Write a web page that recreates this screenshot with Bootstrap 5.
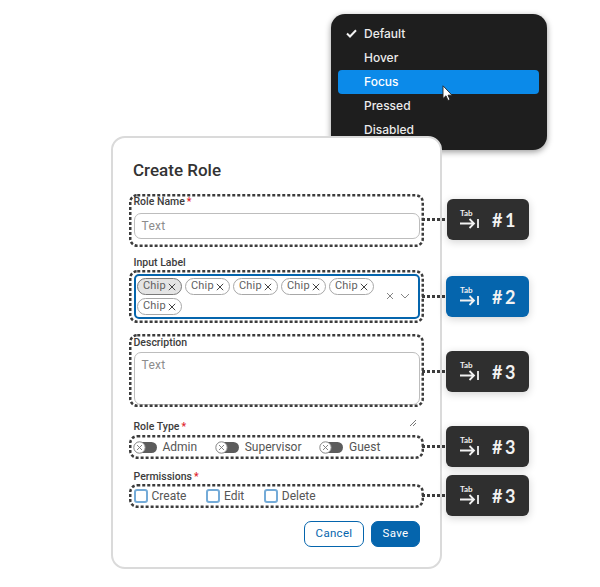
<!DOCTYPE html>
<html lang="en">
<head>
<meta charset="utf-8">
<title>Create Role</title>
<link href="https://cdn.jsdelivr.net/npm/bootstrap@5.3.0/dist/css/bootstrap.min.css" rel="stylesheet">
<style>
html,body{margin:0;background:#fff;overflow:hidden}
.stage{position:relative;width:600px;height:587px;font-family:Roboto,"Liberation Sans",sans-serif;color:#3a3a3a}
.state-menu{position:absolute;left:331px;top:14px;width:216px;height:136px;background:#1e1e1e;border-radius:14px;box-shadow:0 2px 6px rgba(0,0,0,.4);padding:8px 8px 8px 7px;font-family:Inter,"Liberation Sans",sans-serif;font-size:12px;font-weight:500;color:#ececec}
.state-item{height:24px;display:flex;align-items:center;padding:0 0 0 26px;border-radius:4px;position:relative}
.state-item.is-focus{background:#0b8ae9;color:#fff}
.state-check{position:absolute;left:8px;top:7px}
.m-cursor{position:absolute;left:111px;top:71px}
.role-card{position:absolute;left:111px;top:136px;width:331px;height:433px;background:#fff;border:2px solid #dadada;border-radius:14px;padding:21.5px 16px 0 16px}
.role-title{font-size:17px;font-weight:500;color:#333;line-height:21px;margin:0 0 13px 4px}
.ring{padding:2.5px 4.5px;position:relative}
.ring-dash{position:absolute;left:0;top:0;width:100%;height:100%;pointer-events:none}
.ring-dash rect{x:1.25px;y:1.25px;width:calc(100% - 2.5px);height:calc(100% - 2.5px);rx:7px;fill:none;stroke:#3c3c3c;stroke-width:2.5px;stroke-dasharray:3 2}
.field-label{font-size:10.5px;font-weight:500;color:#3c3c3c;line-height:12px}
.req{color:#e01e2b;margin-left:2px}
.outside{margin-left:4.5px}
.input-lbl{margin-top:10px}
.type-lbl{margin-top:14px}
.perm-lbl{margin-top:12px}
.ring-a{height:53px}
.ring-a .field-label{margin-bottom:5px}
.text-box{height:26px;border:1px solid #bdbdbd;border-radius:7px;font-size:12px;color:#8c8c8c;padding:4px 7px;letter-spacing:.3px;line-height:16px}
.ring-b{height:53px;margin-top:1.5px}
.ring-b .chip-box{height:45px;border:2px solid #0565ad;border-radius:5px;margin-top:1.5px;padding:2px 1.5px;display:flex;align-items:flex-start}
.chips{display:flex;flex-wrap:wrap;gap:3px;width:242px}
.chip-pill{height:17px;width:45px;border:1px solid #a8a8a8;border-radius:9px;font-size:11px;color:#5f5f5f;display:flex;align-items:center;justify-content:space-between;padding:0 5px;letter-spacing:.2px}
.chip-pill.on{background:#e4e4e4;border-color:#7a7a7a}
.chip-ctl{display:flex;gap:6px;margin-left:auto;margin-top:14px;margin-right:6px}
.ring-c{height:73px;margin-top:11px}
.ring-c .field-label{margin-bottom:3px}
.area-box{height:53px}
.ring-d,.ring-e{display:flex;align-items:center;font-size:12px;color:#555}
.ring-d{height:24px;margin-top:2px}
.ring-e{height:24px;margin-top:1px}
.opt{display:flex;align-items:center}
.gap-tog{margin-right:18.5px}
.gap-chk{margin-right:19.5px}
.tog{width:23px;height:11px;border-radius:6px;background:#5c5c5c;position:relative;margin-right:6px}
.tog svg{position:absolute;left:-1px;top:-1px}
.chk{width:14px;height:14px;border:2px solid #74abd8;border-radius:3px;margin-right:4px}
.act-row{display:flex;justify-content:flex-end;gap:7px;margin-top:13px;padding-right:4px}
.act{height:26px;border-radius:7px;font-size:11.5px;letter-spacing:.3px;display:flex;align-items:center;justify-content:center;padding:0}
.act-out{width:60px;background:#fff;border:1px solid #0565ad;color:#0565ad}
.act-fill{width:49px;background:#0565ad;border:1px solid #0565ad;color:#fff}
.resize-mark{position:absolute;left:296px;top:281px}
.tab-node{position:absolute;left:422px;width:107px;height:41px;display:flex;align-items:center}
.lead-line{flex:1;height:2.5px;background:repeating-linear-gradient(90deg,#3c3c3c 0 3px,transparent 3px 5px)}
.tab-key{width:83px;height:41px;background:#2f2f2f;border-radius:6px;color:#f2f2f2;box-shadow:0 2px 8px rgba(0,0,0,.18);display:flex;align-items:center;padding-left:14px;font-family:Lato,"Liberation Sans",sans-serif}
.tab-key.first{width:82px;padding-left:13px}
.tab-key.is-now{background:#0565ad}
.tab-glyph{width:22px;display:flex;flex-direction:column;font-size:8px;line-height:9px;font-weight:700;margin-top:-1px}
.tab-num{font-size:18px;font-weight:700;margin-left:10px;letter-spacing:2.5px;line-height:20px}
</style>
</head>
<body>
<main class="stage">
  <div class="state-menu">
    <div class="state-item"><svg class="state-check" width="11" height="9" viewBox="0 0 11 9"><path d="M1 4.5 4 7.5 10 1.2" fill="none" stroke="#f2f2f2" stroke-width="2"/></svg>Default</div>
    <div class="state-item">Hover</div>
    <div class="state-item is-focus">Focus</div>
    <div class="state-item">Pressed</div>
    <div class="state-item">Disabled</div>
    <svg class="m-cursor" width="11" height="17" viewBox="0 0 11 17"><path d="M1 .8V13.5L4 10.8 6 15.5 8 14.6 6 10.2H10Z" fill="#fff" stroke="#222" stroke-width=".9"/></svg>
  </div>

  <section class="role-card">
    <h1 class="role-title">Create Role</h1>
    <div class="ring ring-a">
      <svg class="ring-dash"><rect/></svg>
      <div class="field-label">Role Name<span class="req">*</span></div>
      <div class="text-box">Text</div>
    </div>
    <div class="field-label outside input-lbl">Input Label</div>
    <div class="ring ring-b">
      <svg class="ring-dash"><rect/></svg>
      <div class="chip-box">
        <div class="chips">
          <span class="chip-pill on">Chip<svg width="8" height="8" viewBox="0 0 8 8"><path d="M.8 .8 7.2 7.2M7.2 .8 .8 7.2" stroke="#444" stroke-width="1"/></svg></span>
          <span class="chip-pill">Chip<svg width="8" height="8" viewBox="0 0 8 8"><path d="M.8 .8 7.2 7.2M7.2 .8 .8 7.2" stroke="#444" stroke-width="1"/></svg></span>
          <span class="chip-pill">Chip<svg width="8" height="8" viewBox="0 0 8 8"><path d="M.8 .8 7.2 7.2M7.2 .8 .8 7.2" stroke="#444" stroke-width="1"/></svg></span>
          <span class="chip-pill">Chip<svg width="8" height="8" viewBox="0 0 8 8"><path d="M.8 .8 7.2 7.2M7.2 .8 .8 7.2" stroke="#444" stroke-width="1"/></svg></span>
          <span class="chip-pill">Chip<svg width="8" height="8" viewBox="0 0 8 8"><path d="M.8 .8 7.2 7.2M7.2 .8 .8 7.2" stroke="#444" stroke-width="1"/></svg></span>
          <span class="chip-pill">Chip<svg width="8" height="8" viewBox="0 0 8 8"><path d="M.8 .8 7.2 7.2M7.2 .8 .8 7.2" stroke="#444" stroke-width="1"/></svg></span>
        </div>
        <div class="chip-ctl">
          <svg width="8" height="8" viewBox="0 0 8 8"><path d="M1 1 7 7M7 1 1 7" stroke="#777" stroke-width=".9"/></svg>
          <svg width="10" height="8" viewBox="0 0 10 8"><path d="M1 2 5 6 9 2" fill="none" stroke="#777" stroke-width=".9"/></svg>
        </div>
      </div>
    </div>
    <div class="ring ring-c">
      <svg class="ring-dash"><rect/></svg>
      <div class="field-label">Description</div>
      <div class="text-box area-box">Text</div>
    </div>
    <div class="field-label outside type-lbl">Role Type<span class="req">*</span></div>
    <div class="ring ring-d">
      <svg class="ring-dash"><rect/></svg>
      <span class="opt gap-tog"><span class="tog"><svg width="13" height="13" viewBox="0 0 13 13"><circle cx="6.5" cy="6.5" r="5.7" fill="#fff" stroke="#888"/><path d="M4 4 9 9M9 4 4 9" stroke="#777" stroke-width=".9"/></svg></span>Admin</span>
      <span class="opt gap-tog"><span class="tog"><svg width="13" height="13" viewBox="0 0 13 13"><circle cx="6.5" cy="6.5" r="5.7" fill="#fff" stroke="#888"/><path d="M4 4 9 9M9 4 4 9" stroke="#777" stroke-width=".9"/></svg></span>Supervisor</span>
      <span class="opt"><span class="tog"><svg width="13" height="13" viewBox="0 0 13 13"><circle cx="6.5" cy="6.5" r="5.7" fill="#fff" stroke="#888"/><path d="M4 4 9 9M9 4 4 9" stroke="#777" stroke-width=".9"/></svg></span>Guest</span>
    </div>
    <div class="field-label outside perm-lbl">Permissions<span class="req">*</span></div>
    <div class="ring ring-e">
      <svg class="ring-dash"><rect/></svg>
      <span class="opt gap-chk"><span class="chk"></span>Create</span>
      <span class="opt gap-chk"><span class="chk"></span>Edit</span>
      <span class="opt"><span class="chk"></span>Delete</span>
    </div>
    <div class="act-row">
      <button type="button" class="btn act act-out">Cancel</button>
      <button type="button" class="btn act act-fill">Save</button>
    </div>
    <svg class="resize-mark" width="8" height="8" viewBox="0 0 8 8"><path d="M7 1 1 7M7 4 4 7" stroke="#777" stroke-width="1"/></svg>
  </section>

  <div class="tab-node" style="top:199px"><span class="lead-line"></span><div class="tab-key first"><span class="tab-glyph">Tab<svg width="20" height="11" viewBox="0 0 20 11"><path d="M0 5.5H14M9.5 1 14 5.5 9.5 10M18 1V10" fill="none" stroke="#f2f2f2" stroke-width="1.8"/></svg></span><span class="tab-num">#1</span></div></div>
  <div class="tab-node" style="top:276px"><span class="lead-line"></span><div class="tab-key is-now"><span class="tab-glyph">Tab<svg width="20" height="11" viewBox="0 0 20 11"><path d="M0 5.5H14M9.5 1 14 5.5 9.5 10M18 1V10" fill="none" stroke="#f2f2f2" stroke-width="1.8"/></svg></span><span class="tab-num">#2</span></div></div>
  <div class="tab-node" style="top:351px"><span class="lead-line"></span><div class="tab-key"><span class="tab-glyph">Tab<svg width="20" height="11" viewBox="0 0 20 11"><path d="M0 5.5H14M9.5 1 14 5.5 9.5 10M18 1V10" fill="none" stroke="#f2f2f2" stroke-width="1.8"/></svg></span><span class="tab-num">#3</span></div></div>
  <div class="tab-node" style="top:426px"><span class="lead-line"></span><div class="tab-key"><span class="tab-glyph">Tab<svg width="20" height="11" viewBox="0 0 20 11"><path d="M0 5.5H14M9.5 1 14 5.5 9.5 10M18 1V10" fill="none" stroke="#f2f2f2" stroke-width="1.8"/></svg></span><span class="tab-num">#3</span></div></div>
  <div class="tab-node" style="top:475px"><span class="lead-line"></span><div class="tab-key"><span class="tab-glyph">Tab<svg width="20" height="11" viewBox="0 0 20 11"><path d="M0 5.5H14M9.5 1 14 5.5 9.5 10M18 1V10" fill="none" stroke="#f2f2f2" stroke-width="1.8"/></svg></span><span class="tab-num">#3</span></div></div>
</main>
<script src="https://cdn.jsdelivr.net/npm/bootstrap@5.3.0/dist/js/bootstrap.bundle.min.js"></script>
</body>
</html>
